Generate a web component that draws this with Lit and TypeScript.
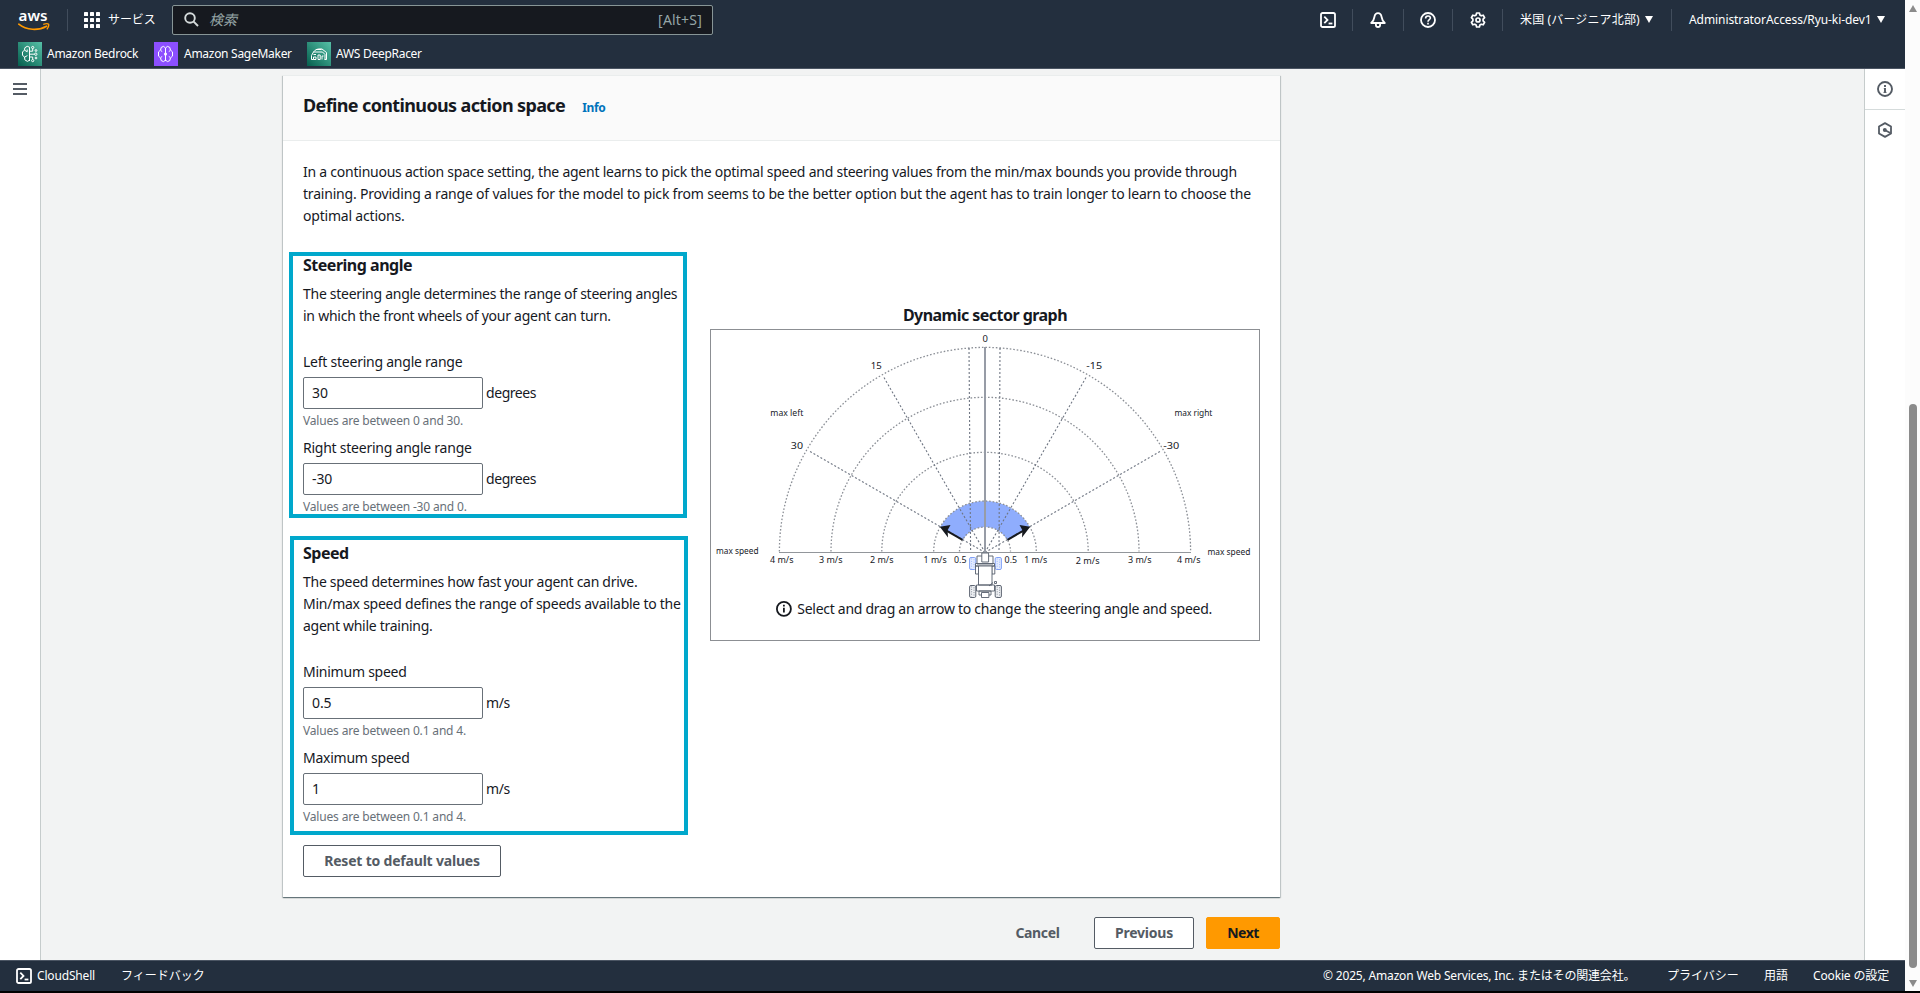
import { LitElement, html, svg, css } from "lit";
import { customElement, property } from "lit/decorators.js";

const CX = 985;
const CY = 552.5;

const polar = (r: number, deg: number): [number, number] => {
  const a = (deg * Math.PI) / 180;
  return [CX + r * Math.sin(a), CY - r * Math.cos(a)];
};

const consoleIcon = html`<svg width="16" height="16" viewBox="0 0 16 16" fill="none" stroke="currentColor" stroke-width="1.8">
  <rect x="1" y="1" width="14" height="14" rx="1.6" />
  <path d="M4.3 4.6 7.5 7.9 4.3 11.2" />
  <path d="M8.6 11.5h3.8" />
</svg>`;

const infoIcon = (size: number) => html`<svg width=${size} height=${size} viewBox="0 0 16 16" fill="none" stroke="currentColor" stroke-width="1.9">
  <circle cx="8" cy="8" r="7" />
  <path d="M8 7v4.6M8 4.1v1.8" />
  <path d="M6.8 7.6H8M6.5 11.4h3" stroke-width="1" />
</svg>`;

/* Sector graph: dotted speed rings, angle rays and the selected band. */
@customElement("sector-graph")
export class SectorGraph extends LitElement {
  static styles = css`
    :host { display: block; }
    svg { display: block; }
    .ring { fill: none; stroke: #8b8f96; stroke-width: 1.3; stroke-dasharray: 1.6 1.9; }
    .ray { fill: none; stroke: #6f7683; stroke-width: 1.1; stroke-dasharray: 2 2; }
    .base { stroke: #92969b; stroke-width: 1.2; }
    .axis { stroke: #979ca6; stroke-width: 2; }
    .band { fill: #6f96fd; fill-opacity: 0.78; }
    .arrow { stroke: #16191f; stroke-width: 2; }
    .head { fill: #16191f; }
    text { font-family: "Noto Sans", sans-serif; font-size: 9px; fill: #16191f; }
    .small { font-size: 8.6px; }
    .note { font-size: 14px; }
    .car { fill: #fff; stroke: #565e6c; stroke-width: 0.9; }
    .tyre { fill: #eef0f3; stroke: #4d5563; stroke-width: 0.9; }
    .steer { fill: #e4ecff; stroke: #7396f5; stroke-width: 0.9; }
    .tread { stroke: #858d9a; stroke-width: 1; stroke-dasharray: 1 1.4; }
    .tread-blue { stroke: #9db6fb; stroke-width: 1; stroke-dasharray: 1 1.4; }
  `;

  private ring(rx: number, ry: number) {
    return svg`<path class="ring" d="M${CX - rx} ${CY - 1}A${rx} ${ry} 0 0 1 ${CX + rx} ${CY - 1}" />`;
  }

  private ray(deg: number) {
    const [x, y] = polar(203, deg);
    return svg`<line class="ray" x1=${CX} y1=${CY} x2=${x} y2=${y} />`;
  }

  private label(t: string, x: number, y: number, w: number, cls = "") {
    return svg`<text class=${cls} x=${x} y=${y} textLength=${w} lengthAdjust="spacingAndGlyphs">${t}</text>`;
  }

  private tyre(x: number, y: number, front: boolean) {
    return svg`<rect class=${front ? "steer" : "tyre"} x=${x} y=${y} width="6.2" height="12" rx="1.4" />
      <path class=${front ? "tread-blue" : "tread"} d="M${x + 2} ${y + 1}v10M${x + 4.4} ${y + 1.8}v9.4" />`;
  }

  render() {
    const [ax, ay] = polar(51.5, -60);
    const [bx, by] = polar(51.5, 60);
    const [cx, cy] = polar(25.5, 60);
    const [dx, dy] = polar(25.5, -60);
    return html`<svg width="548" height="310" viewBox="711 330 548 310">
      <path class="band" d="M${ax} ${ay}A51.5 51.5 0 0 1 ${bx} ${by}L${cx} ${cy}A25.5 25.5 0 0 0 ${dx} ${dy}Z" />
      ${this.ring(25.5, 24.5)}${this.ring(51.3, 50.5)}${this.ring(103.2, 99.3)}${this.ring(154, 154.2)}${this.ring(205.6, 204.2)}
      ${[-60, -30, 30, 60].map((d) => this.ray(d))}
      <path class="ray" d="M969 348 970.6 552M1000 348 999 552" />
      <line class="base" x1="779" y1="552.5" x2="1191" y2="552.5" />
      <line class="axis" x1="985" y1="347" x2="985" y2="553" />
      <line class="arrow" x1="962.5" y1="539.8" x2="946" y2="530.3" />
      <path class="head" d="M939.8 526.8 950.5 525 947.6 530.3 948 537.4Z" />
      <line class="arrow" x1="1007.5" y1="539.8" x2="1024" y2="530.3" />
      <path class="head" d="M1030.2 526.8 1019.5 525 1022.4 530.3 1022 537.4Z" />

      ${this.tyre(969.6, 557.5, true)}${this.tyre(995.2, 557.5, true)}
      ${this.tyre(969.6, 585.5, false)}${this.tyre(995.2, 585.5, false)}
      <path class="car" d="M977 556h16v8h-16zM975.5 563.5h19v2.5h-19zM975.5 566h3v8h-3zM991.8 566h3v8h-3z" />
      <path class="car" d="M978.5 566h13.5v19h-13.5zM976.5 585h18v6h-18zM979 591h12v4h-12z" />
      <path class="car" d="M981.8 553h6.800v9h-6.800zM981.500 592.500h7.400v5h-7.400z" />
      <path class="car" d="M989 586 993 582.500M994.500 581.500h2v2h-2z" />

      ${this.label("0", 982.4, 342, 5.4)}
      ${this.label("15", 870.8, 369, 11)}
      ${this.label("-15", 1086.3, 369, 15.8)}
      ${this.label("30", 790.8, 449, 12.2)}
      ${this.label("-30", 1163.2, 449, 16)}
      ${this.label("max left", 770.3, 416.4, 33, "small")}
      ${this.label("max right", 1174.4, 416.4, 38, "small")}
      ${this.label("max speed", 716, 554, 42.5, "small")}
      ${this.label("max speed", 1207.4, 555, 43, "small")}
      ${this.label("4 m/s", 770, 563, 23.5)}
      ${this.label("3 m/s", 819, 563, 23.5)}
      ${this.label("2 m/s", 870, 563, 23.5)}
      ${this.label("1 m/s", 923.6, 563, 23)}
      ${this.label("0.5", 954, 563, 12.5)}
      ${this.label("0.5", 1004.6, 563, 12.5)}
      ${this.label("1 m/s", 1024.2, 563, 23)}
      ${this.label("2 m/s", 1075.8, 563.6, 23.8)}
      ${this.label("3 m/s", 1128, 563, 23.5)}
      ${this.label("4 m/s", 1177, 563, 23.5)}

      <g fill="none" stroke="#16191f" stroke-width="1.8">
        <circle cx="783.9" cy="608.9" r="7" />
        <path d="M783.9 607.8v4.6M783.9 604.8v1.8" />
      </g>
      <text class="note" x="797.3" y="613.8" textLength="415" lengthAdjust="spacing">Select and drag an arrow to change the steering angle and speed.</text>
    </svg>`;
  }
}

@customElement("number-field")
export class NumberField extends LitElement {
  @property() label = "";
  @property() value = "";
  @property() unit = "";
  @property() hint = "";

  static styles = css`
    :host { display: block; height: 79px; }
    .label { line-height: 22px; letter-spacing: -0.24px; padding-top: 1px; margin-bottom: 4px; }
    .row { display: flex; align-items: center; gap: 4px; }
    .box {
      width: 180px; height: 32px; box-sizing: border-box; border: 1px solid #687078; border-radius: 2px;
      background: #fff; padding: 0 8px; line-height: 30px; letter-spacing: -0.1px;
    }
    .unit { letter-spacing: -0.44px; line-height: 22px; margin-left: -1px; }
    .hint { color: #687078; font-size: 12px; line-height: 16px; margin-top: 4px; letter-spacing: -0.17px; }
  `;

  render() {
    return html`<div class="label">${this.label}</div>
      <div class="row"><div class="box">${this.value}</div><div class="unit">${this.unit}</div></div>
      <div class="hint">${this.hint}</div>`;
  }
}

@customElement("app-root")
export class AppRoot extends LitElement {
  static styles = css`
    :host {
      display: grid; grid-template-columns: minmax(0, 1fr) 15px; grid-template-rows: 991px 2px;
      height: 993px; overflow: hidden; background: #000; color: #16191f;
      font: 14px/22px "Noto Sans", "Noto Sans CJK JP", sans-serif;
    }
    svg { display: block; flex: none; }
    .page { display: grid; grid-template-rows: 69px 891px 31px; min-width: 0; }
    .bar { background: #232f3e; color: #fff; font-size: 12px; white-space: nowrap; }
    header { border-bottom: 1px solid #4b5563; box-sizing: border-box; }
    .top { display: flex; height: 39px; align-items: center; padding-left: 18px; }
    .sep { width: 1px; height: 22px; background: #414d5c; flex: none; }
    .logo { margin: -6px 17px 0 0; }
    .logo text { font-family: "Noto Sans", sans-serif; font-size: 15px; font-weight: 600; fill: #fff; }
    .grid { margin-left: 16px; margin-top: 1px; }
    .services { margin-left: 8px; width: 48px; letter-spacing: -0.1px; }
    .search {
      display: flex; align-items: center; width: 541px; height: 30px; box-sizing: border-box; margin-left: 16px;
      border: 1px solid #879596; border-radius: 2px; background: #16191f; color: #95a5a6; font-size: 14px; padding: 0 10px 0 11px;
    }
    .search svg { color: #d5dbdb; }
    .placeholder { margin-left: 10px; font-style: italic; flex: 1; }
    .alt { letter-spacing: 0.2px; }
    .tools { display: flex; align-items: center; margin-left: auto; }
    .s1 { margin: 0 17px 0 16px; }
    .s2 { margin: 0 16px 0 17px; }
    .s3 { margin-left: 16px; }
    .s4 { margin-left: 18px; }
    .region { margin-left: 17px; width: 120px; letter-spacing: 0.14px; }
    .account { margin-left: 17px; width: 183px; letter-spacing: -0.08px; }
    .caret { width: 0; height: 0; border: 4px solid transparent; border-top: 7px solid #fff; border-bottom: 0; margin-left: 5px; }
    .last { margin-right: 20px; }
    .favs { display: flex; padding: 3px 0 0 18px; height: 24px; line-height: 24px; }
    .fav { display: flex; gap: 5px; letter-spacing: -0.28px; width: 136px; }
    .fav.wide { width: 153px; gap: 6px; }
    main { display: grid; grid-template-columns: 41px minmax(0, 1fr) 40px; background: #f2f3f3; }
    .nav { background: #fff; border-right: 1px solid #c6cccc; padding: 14px 0 0 13px; color: #545b64; }
    .side { background: #fff; border-left: 1px solid #c6cccc; margin-left: -1px; color: #545b64; }
    .side div { height: 40px; display: flex; align-items: center; padding-left: 12px; }
    .side div:first-child { border-bottom: 1px solid #d5dbdb; }
    .content { padding: 6px 0 0 242px; }
    .card {
      width: 997px; height: 822px; box-sizing: border-box; background: #fff; border-top: 1px solid #eaeded;
      box-shadow: 0 1px 1px 0 rgba(0, 28, 36, 0.42), 1px 1px 1px 0 rgba(0, 28, 36, 0.15), -1px 1px 1px 0 rgba(0, 28, 36, 0.15);
    }
    .head { height: 64px; border-bottom: 1px solid #eaeded; background: #fafafa; display: flex; align-items: baseline; padding-left: 20px; }
    h2 { margin: 17px 17px 0 0; font-size: 18px; line-height: 24px; letter-spacing: -0.63px; font-weight: 700; }
    .info { color: #0073bb; font-size: 12px; font-weight: 700; letter-spacing: -0.35px; }
    .body { padding: 20px 20px 0; }
    p { margin: 0; white-space: nowrap; letter-spacing: -0.198px; }
    .tight { letter-spacing: -0.24px; }
    .cols { display: grid; grid-template-columns: 407px 550px; margin-top: 27px; }
    .group { position: relative; margin-bottom: 27px; }
    .group + .group { margin-bottom: 20px; }
    h3 { margin: 0 0 7px; font-size: 16px; line-height: 22px; font-weight: 700; letter-spacing: -0.49px; }
    .group p { letter-spacing: -0.28px; margin-bottom: 23px; }
    .group .loose { letter-spacing: -0.25px; }
    number-field + number-field { margin-top: 7px; }
    .mark { position: absolute; border: 4px solid #00a8cc; box-sizing: border-box; pointer-events: none; }
    .mark.a { left: -14px; top: -2px; width: 398px; height: 266px; }
    .mark.b { left: -13px; top: -6px; width: 398px; height: 299px; }
    .btn {
      display: inline-flex; align-items: center; justify-content: center; height: 32px; box-sizing: border-box;
      border: 1px solid #545b64; border-radius: 2px; background: #fff; color: #545b64; font-weight: 700; letter-spacing: -0.2px;
    }
    .reset { width: 198px; }
    .graph { padding-top: 50px; text-align: center; }
    .graph h3 { margin-bottom: 3px; letter-spacing: -0.53px; }
    .frame { border: 1px solid #8c8f93; }
    .actions { display: flex; justify-content: flex-end; width: 997px; margin-top: 20px; }
    .cancel { border-color: transparent; background: none; width: 79px; letter-spacing: -0.35px; }
    .prev { width: 100px; margin: 0 12px 0 17px; }
    .next { width: 74px; background: #f90; border-color: #f90; color: #16191f; letter-spacing: -0.5px; }
    footer { display: flex; align-items: center; border-top: 1px solid #4b5563; box-sizing: border-box; padding: 0 16px; }
    .shell { margin-left: 5px; width: 84px; letter-spacing: -0.17px; }
    .copy { margin-left: auto; width: 344px; letter-spacing: -0.17px; }
    .priv { width: 97px; }
    .terms { width: 49px; }
    .cookie { width: 76px; letter-spacing: -0.15px; }
    .scroll { background: #fcfcfc; display: flex; flex-direction: column; align-items: center; }
    .up, .down { width: 0; height: 0; border: 4px solid transparent; }
    .up { border-top: 0; border-bottom: 7px solid #8b8b8b; margin-top: 5px; }
    .thumb { width: 8px; height: 564px; border-radius: 4px; background: #8b8b8b; margin-top: 392px; }
    .down { border-bottom: 0; border-top: 7px solid #8b8b8b; margin-top: 12px; }
  `;

  private header() {
    return html`<header class="bar">
      <div class="top">
        <svg class="logo" width="32" height="28" viewBox="0 -8 32 28">
          <text x="0.5" y="10" textLength="29" lengthAdjust="spacingAndGlyphs">aws</text>
          <path d="M0.8 13.2C8.5 19.4 20.5 19.8 28.6 15.2" fill="none" stroke="#f90" stroke-width="1.7" stroke-linecap="round" />
          <path d="M25.2 13.3C28 12.5 30 12.6 30.6 13.3 31 14.4 30.3 16.4 28.9 18.3" fill="none" stroke="#f90" stroke-width="1.4" />
        </svg>
        <span class="sep"></span>
        <svg class="grid" width="16" height="16" viewBox="0 0 16 16" fill="#fff">
          ${[0, 6, 12].map((x) => [0, 6, 12].map((y) => svg`<rect x=${x} y=${y} width="4" height="4" rx=".6" />`))}
        </svg>
        <span class="services">サービス</span>
        <div class="search">
          <svg width="15" height="15" viewBox="0 0 15 15" fill="none" stroke="currentColor" stroke-width="1.9">
            <circle cx="6" cy="6" r="4.8" /><path d="M9.4 9.4 14 14" />
          </svg>
          <span class="placeholder">検索</span><span class="alt">[Alt+S]</span>
        </div>
        <div class="tools">
          ${consoleIcon}
          <span class="sep s1"></span>
          <svg width="16" height="16" viewBox="0 0 16 16" fill="none" stroke="#fff" stroke-width="1.8">
            <path d="M1.200 11H14.800C12.600 9.200 12 7.600 11.600 5 11.200 2.600 10 1.200 8 1.200S4.800 2.600 4.400 5C4 7.600 3.400 9.200 1.200 11Z" stroke-linejoin="round" />
            <path d="M5.900 11.800v1.100a2.100 2.100 0 0 0 4.200 0V11.800" />
          </svg>
          <span class="sep s2"></span>
          <svg width="16" height="16" viewBox="0 0 16 16" fill="none" stroke="#fff" stroke-width="1.8">
            <circle cx="8" cy="8" r="7" />
            <path d="M5.6 6.4C5.6 4.9 6.6 4 8 4s2.400.8 2.400 2.100C10.400 7.700 8 7.600 8 9.700M8 10.800v1.700" stroke-width="1.6" />
          </svg>
          <span class="sep s1"></span>
          <svg width="16" height="16" viewBox="0 0 16 16" fill="none" stroke="#fff" stroke-width="1.7" stroke-linejoin="round">
            <path d="M6.600 1h2.800l.5 2 1.300.8 2-.6 1.400 2.400L13.100 7.200v1.600l1.500 1.600-1.400 2.400-2-.6-1.300.8-.5 2H6.600l-.5-2-1.300-.8-2 .6-1.400-2.400 1.500-1.600V7.200L1.400 5.600 2.800 3.200l2 .6L6.100 3Z" />
            <circle cx="8" cy="8" r="2" />
          </svg>
          <span class="sep s3"></span>
          <span class="region">米国 (バージニア北部)</span><span class="caret"></span>
          <span class="sep s4"></span>
          <span class="account">AdministratorAccess/Ryu-ki-dev1</span><span class="caret last"></span>
        </div>
      </div>
      <div class="favs">
        <div class="fav">
          <svg width="24" height="24" viewBox="0 0 24 24">
            <defs><linearGradient id="g" x1="0" y1="1" x2="1" y2="0"><stop stop-color="#055f4e" /><stop offset="1" stop-color="#56c0a7" /></linearGradient></defs>
            <rect width="24" height="24" fill="url(#g)" />
            <g fill="none" stroke="#fff" stroke-width="1">
              <path d="M11.500 19V5.200L9.200 4.300 6.800 5.800 6.600 8.200 4.500 9.800v3.600l2.100 1.600.2 2.800 2.600 1.600 2.100-1.200M6.600 8.200l2.600 1.600V7.500M6.800 15l2.600-1.400" />
              <path d="M11.500 9.200h3.200V6.700M11.500 12.200h5M11.500 15h3.200v2.400" />
              <circle cx="14.700" cy="5.500" r="1.100" /><circle cx="17.800" cy="12.200" r="1.200" /><circle cx="14.700" cy="18.600" r="1.100" /><circle cx="18" cy="8.500" r=".9" /><circle cx="18" cy="16" r=".9" />
            </g>
          </svg><span>Amazon Bedrock</span>
        </div>
        <div class="fav wide">
          <svg width="24" height="24" viewBox="0 0 24 24">
            <rect width="24" height="24" fill="#8c4fff" />
            <g fill="none" stroke="#fff" stroke-width="1">
              <path d="M11.500 19V6L9.600 4.400 7.200 5.400 6.600 8 4.500 9.900v4.200L6.600 16l.6 2.600 2.400 1 1.900-1.600M11.500 6l1.900-1.600 2.400 1 .6 2.600 2.100 1.900v4.200L16.400 16l-.6 2.600-2.400 1-1.900-1.600" />
              <path d="M6.600 8.500l1.600 1M6.600 15.500l1.600-1M16.400 8.500l-1.600 1M16.400 15.500l-1.600-1" />
            </g>
            <circle cx="11.500" cy="12" r="1.500" fill="#fff" />
          </svg><span>Amazon SageMaker</span>
        </div>
        <div class="fav">
          <svg width="24" height="24" viewBox="0 0 24 24">
            <defs><linearGradient id="h" x1="0" y1="1" x2="1" y2="0"><stop stop-color="#055f4e" /><stop offset="1" stop-color="#56c0a7" /></linearGradient></defs>
            <rect width="24" height="24" fill="url(#h)" />
            <g fill="none" stroke="#fff" stroke-width="1">
              <path d="M4.500 17.500v-4L6.500 10h9l2.500 2.500v5M6.500 10C8 7.500 11 6.500 15 7l4.500 3.500v7M9 7.500h5.500" />
              <path d="M6.500 17.500v-2.500h2.500v2.500zM11 17.500v-4.500h2.200v4.500zM15 17.500v-3.500h1.500M6.500 12.500h2.500M4.500 17.500h2M17.500 17.500h2" />
            </g>
          </svg><span>AWS DeepRacer</span>
        </div>
      </div>
    </header>`;
  }

  render() {
    return html`
      <div class="page">
        ${this.header()}
        <main>
          <div class="nav">
            <svg width="14" height="12" viewBox="0 0 14 12" fill="currentColor"><path d="M0 0h14v2H0zM0 5h14v2H0zM0 10h14v2H0z" /></svg>
          </div>
          <div class="content">
            <section class="card">
              <div class="head"><h2>Define continuous action space</h2><span class="info">Info</span></div>
              <div class="body">
                <p><span class="tight">In a continuous action space setting, the agent learns to pick the optimal speed and steering values from the min/max bounds you provide through</span><br />training. Providing a range of values for the model to pick from seems to be the better option but the agent has to train longer to learn to choose the<br />optimal actions.</p>
                <div class="cols">
                  <div>
                    <div class="group">
                      <h3>Steering angle</h3>
                      <p>The steering angle determines the range of steering angles<br /><span class="loose">in which the front wheels of your agent can turn.</span></p>
                      <number-field label="Left steering angle range" value="30" unit="degrees" hint="Values are between 0 and 30."></number-field>
                      <number-field label="Right steering angle range" value="-30" unit="degrees" hint="Values are between -30 and 0."></number-field>
                      <div class="mark a"></div>
                    </div>
                    <div class="group">
                      <h3>Speed</h3>
                      <p>The speed determines how fast your agent can drive.<br /><span class="loose">Min/max speed defines the range of speeds available to the</span><br />agent while training.</p>
                      <number-field label="Minimum speed" value="0.5" unit="m/s" hint="Values are between 0.1 and 4."></number-field>
                      <number-field label="Maximum speed" value="1" unit="m/s" hint="Values are between 0.1 and 4."></number-field>
                      <div class="mark b"></div>
                    </div>
                    <div class="btn reset">Reset to default values</div>
                  </div>
                  <div class="graph">
                    <h3>Dynamic sector graph</h3>
                    <div class="frame"><sector-graph></sector-graph></div>
                  </div>
                </div>
              </div>
            </section>
            <div class="actions">
              <div class="btn cancel">Cancel</div>
              <div class="btn prev">Previous</div>
              <div class="btn next">Next</div>
            </div>
          </div>
          <div class="side">
            <div>${infoIcon(16)}</div>
            <div>
              <svg width="16" height="16" viewBox="0 0 16 16" fill="none" stroke="currentColor" stroke-width="1.8">
                <path d="M8 1.100 14 4.500v7L8 14.900 2 11.500v-7Z" stroke-linejoin="round" />
                <circle cx="7.800" cy="8" r="2" fill="currentColor" stroke="none" /><path d="M8.200 8.200 13.400 11" />
              </svg>
            </div>
          </div>
        </main>
        <footer class="bar">
          ${consoleIcon}<span class="shell">CloudShell</span><span>フィードバック</span>
          <span class="copy">© 2025, Amazon Web Services, Inc. またはその関連会社。</span>
          <span class="priv">プライバシー</span><span class="terms">用語</span><span class="cookie">Cookie の設定</span>
        </footer>
      </div>
      <div class="scroll"><div class="up"></div><div class="thumb"></div><div class="down"></div></div>
    `;
  }
}
